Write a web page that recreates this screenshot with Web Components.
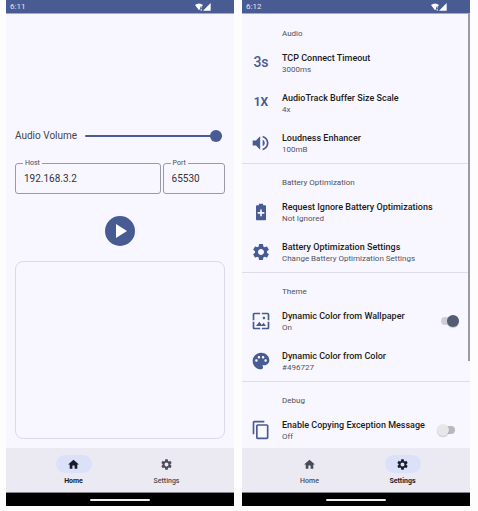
<!DOCTYPE html>
<html lang="en">
<head>
<meta charset="utf-8">
<title>Audio client</title>
<style>
body {
  margin: 0; background: #fdfdfe; font-family: Roboto, sans-serif; color: #1b1b21;
  --primary: #485b93; --surface: #f8f7ff; --bar: #ebeaf3; --pill: #dbe1f9; --muted: #494b57; --line: #dddce8;
}
</style>
</head>
<body>
<phone-pair>
  <phone-screen time="6:11" tab="home"><home-page></home-page></phone-screen>
  <phone-screen time="6:12" tab="settings">
    <settings-page>
      <settings-group heading="Audio">
        <settings-row heading="TCP Connect Timeout" note="3000ms"><text-icon slot="icon" large>3s</text-icon></settings-row>
        <settings-row heading="AudioTrack Buffer Size Scale" note="4x"><text-icon slot="icon">1X</text-icon></settings-row>
        <settings-row heading="Loudness Enhancer" note="100mB"><md-icon slot="icon" name="volume"></md-icon></settings-row>
      </settings-group>
      <settings-group heading="Battery Optimization" divided>
        <settings-row heading="Request Ignore Battery Optimizations" note="Not Ignored"><md-icon slot="icon" name="battery"></md-icon></settings-row>
        <settings-row heading="Battery Optimization Settings" note="Change Battery Optimization Settings"><md-icon slot="icon" name="gear"></md-icon></settings-row>
      </settings-group>
      <settings-group heading="Theme" divided>
        <settings-row heading="Dynamic Color from Wallpaper" note="On" toggle="on"><md-icon slot="icon" name="wallpaper"></md-icon></settings-row>
        <settings-row heading="Dynamic Color from Color" note="#496727"><md-icon slot="icon" name="palette"></md-icon></settings-row>
      </settings-group>
      <settings-group heading="Debug" divided>
        <settings-row heading="Enable Copying Exception Message" note="Off" toggle="off"><md-icon slot="icon" name="copy"></md-icon></settings-row>
      </settings-group>
    </settings-page>
  </phone-screen>
</phone-pair>
<script>
const ICONS = {
  home: 'M10 20v-6h4v6h5v-8h3L12 3 2 12h3v8z',
  gear: 'M19.14 12.94c.04-.3.06-.61.06-.94 0-.32-.02-.64-.07-.94l2.03-1.58c.18-.14.23-.41.12-.61l-1.92-3.32c-.12-.22-.37-.29-.59-.22l-2.39.96c-.5-.38-1.03-.7-1.62-.94l-.36-2.54c-.04-.24-.24-.41-.48-.41h-3.84c-.24 0-.43.17-.47.41l-.36 2.54c-.59.24-1.13.57-1.62.94l-2.39-.96c-.22-.08-.47 0-.59.22L2.74 8.87c-.12.21-.08.47.12.61l2.03 1.58c-.05.3-.09.63-.09.94s.02.64.07.94l-2.03 1.58c-.18.14-.23.41-.12.61l1.92 3.32c.12.22.37.29.59.22l2.39-.96c.5.38 1.03.7 1.62.94l.36 2.54c.05.24.24.41.48.41h3.84c.24 0 .44-.17.47-.41l.36-2.54c.59-.24 1.13-.56 1.62-.94l2.39.96c.22.08.47 0 .59-.22l1.92-3.32c.12-.22.07-.47-.12-.61l-2.01-1.58zM12 15.6c-1.98 0-3.6-1.62-3.6-3.6s1.62-3.6 3.6-3.6 3.6 1.62 3.6 3.6-1.62 3.6-3.6 3.6z',
  volume: 'M2 9v6h4l5 5V4L6 9H2zm14.500 3c0-1.770-1.020-3.290-2.500-4.030v8.050c1.480-.730 2.500-2.250 2.500-4.020zM14 3.230v2.060c2.890.86 5 3.540 5 6.710s-2.110 5.850-5 6.710v2.060c4.010-.91 7-4.490 7-8.770s-2.990-7.860-7-8.770z',
  battery: 'M16.670 4H14.500V2h-5v2H7.330C6.600 4 6 4.600 6 5.330v15.330C6 21.400 6.600 22 7.330 22h9.330c.74 0 1.340-.6 1.340-1.330V5.330C18 4.600 17.400 4 16.670 4zM16 14h-3v3h-2v-3H8v-2h3V9h2v3h3v2z',
  wallpaper: 'M4 4h7V2H4c-1.100 0-2 .9-2 2v7h2V4zm6 9l-4 5h12l-3-4-2.030 2.710L10 13zm7-4.500c0-.83-.67-1.500-1.500-1.500S14 7.670 14 8.500s.67 1.500 1.500 1.500S17 9.330 17 8.500zM20 2h-7v2h7v7h2V4c0-1.100-.9-2-2-2zm0 18h-7v2h7c1.100 0 2-.9 2-2v-7h-2v7zM4 13H2v7c0 1.100.9 2 2 2h7v-2H4v-7z',
  palette: 'M12 2C6.490 2 2 6.490 2 12s4.490 10 10 10c1.380 0 2.500-1.120 2.500-2.500 0-.61-.23-1.200-.64-1.670-.08-.1-.13-.21-.13-.33 0-.28.22-.5.5-.5H16c3.310 0 6-2.690 6-6C22 6.040 17.510 2 12 2zM6.500 13C5.670 13 5 12.330 5 11.500S5.670 10 6.500 10 8 10.670 8 11.500 7.330 13 6.500 13zm3-4C8.670 9 8 8.330 8 7.500S8.670 6 9.500 6s1.500.67 1.500 1.500S10.330 9 9.500 9zm5 0C13.670 9 13 8.330 13 7.500S13.670 6 14.500 6s1.500.67 1.500 1.500S15.330 9 14.500 9zm3 4c-.83 0-1.500-.67-1.500-1.500s.67-1.500 1.500-1.500 1.500.67 1.500 1.500-.67 1.500-1.500 1.500z',
  copy: 'M16 1H4c-1.100 0-2 .9-2 2v14h2V3h12V1zm3 4H8c-1.100 0-2 .9-2 2v14c0 1.100.9 2 2 2h11c1.100 0 2-.9 2-2V7c0-1.100-.9-2-2-2zm0 16H8V7h11v14z',
  play: 'M8 5v14l11-7z',
  wifi: 'M12 22L0 6Q12-3 24 6l-4 5h-5v7z M17 13h3v2h-3z M17 17h3v6h-3z',
  signal: 'M0 23h23V0z'
};

class Base extends HTMLElement {
  connectedCallback() {
    if (this.shadowRoot) return;
    this.attachShadow({ mode: 'open' }).innerHTML =
      `<style>*{box-sizing:border-box}:host{display:block;box-sizing:border-box}${this.css()}</style>${this.html()}`;
  }
  attr(name) { return this.getAttribute(name) || ''; }
  css() { return ''; }
  html() { return '<slot></slot>'; }
}

customElements.define('phone-pair', class extends Base {
  css() { return ':host{display:grid;grid-template-columns:1fr 1fr;gap:8px;height:100vh;padding:0 8px 5px 6px}'; }
});

customElements.define('md-icon', class extends Base {
  css() { return ':host{width:var(--icon-size,20px);height:var(--icon-size,20px)}svg{display:block;width:100%;height:100%;fill:currentColor}'; }
  html() { return `<svg viewBox="0 0 24 24" aria-hidden="true"><path d="${ICONS[this.attr('name')]}"/></svg>`; }
});

customElements.define('text-icon', class extends Base {
  css() { return ':host{font-weight:700;font-size:12px;line-height:18px;padding-bottom:2px}:host([large]){font-weight:500;font-size:14px}'; }
});

customElements.define('phone-screen', class extends Base {
  css() { return `
    :host{display:flex;flex-direction:column;min-width:0;min-height:0;background:var(--surface)}
    main{flex:1;min-height:0;display:flex;flex-direction:column}
    ::slotted(*){flex:1;min-height:0}`; }
  html() { return `<status-bar time="${this.attr('time')}"></status-bar><main><slot></slot></main><nav-bar tab="${this.attr('tab')}"></nav-bar><gesture-bar></gesture-bar>`; }
});

customElements.define('status-bar', class extends Base {
  css() { return `
    :host{display:flex;align-items:center;height:14px;padding:0 23px 0 4px;background:var(--primary);border-bottom:1px solid #a3abcb;color:#e6e9f5;font-size:8px;line-height:13px}
    span{flex:1} md-icon{--icon-size:8px;color:#fff}`; }
  html() { return `<span>${this.attr('time')}</span><md-icon name="wifi"></md-icon><md-icon name="signal"></md-icon>`; }
});

customElements.define('gesture-bar', class extends Base {
  css() { return ':host{display:flex;justify-content:center;align-items:center;height:14px;background:#000;border-top:1px solid #85858b}i{width:60px;height:2px;border-radius:1px;background:#ededed}'; }
  html() { return '<i></i>'; }
});

customElements.define('nav-bar', class extends Base {
  css() { return `
    :host{background:var(--bar);padding:7px 21px 0;height:44px}
    nav{display:flex}
    button{flex:1;border:0;background:none;padding:0;font:500 7px/9px Roboto,sans-serif;color:var(--muted);display:flex;flex-direction:column;align-items:center;gap:4px}
    span{display:flex;align-items:center;justify-content:center;width:36px;height:18px;border-radius:9px}
    md-icon{--icon-size:13px}
    [aria-current]{color:#171b2c;font-weight:700}
    [aria-current] span{background:var(--pill)}`; }
  html() {
    const item = (id, icon, text) => `<button type="button"${this.attr('tab') === id ? ' aria-current="page"' : ''}><span><md-icon name="${icon}"></md-icon></span>${text}</button>`;
    return `<nav>${item('home', 'home', 'Home')}${item('settings', 'gear', 'Settings')}</nav>`;
  }
});

customElements.define('outlined-field', class extends Base {
  css() { return `
    fieldset{margin:0;padding:0 8px;min-width:0;height:35px;border:1px solid #9a99a8;border-radius:3px}
    legend{padding:0 2px;margin-left:-1px;font-size:7px;line-height:8px;color:var(--muted)}
    label{display:block}
    input{display:block;width:100%;height:24px;border:0;padding:0;background:none;outline:0;font:10px/24px Roboto,sans-serif;color:#33333c}`; }
  html() { return `<fieldset><legend><label for="f">${this.attr('label')}</label></legend><input id="f" type="text" value="${this.attr('value')}"></fieldset>`; }
});

customElements.define('home-page', class extends Base {
  css() { return `
    :host{display:flex;flex-direction:column;padding:114px 9px 9px}
    .volume{display:flex;align-items:center;gap:8px;height:16px;font-size:10px;line-height:16px;color:#44454f;padding-right:3px}
    input[type=range]{appearance:none;flex:1;min-width:0;margin:0;height:12px;background:none}
    input::-webkit-slider-runnable-track{height:2px;border-radius:1px;background:var(--primary)}
    input::-webkit-slider-thumb{appearance:none;width:12px;height:12px;margin-top:-5px;border-radius:50%;background:var(--primary)}
    .fields{display:grid;grid-template-columns:7fr 3fr;gap:2px;margin-top:15px}
    button{align-self:center;display:grid;place-items:center;width:30px;height:30px;margin:22px 0 15px;border:0;border-radius:50%;padding:0;background:var(--primary);color:#fff}
    button md-icon{--icon-size:24px}
    .log{flex:1;border:1px solid #dbdae8;border-radius:8px}`; }
  html() { return `
    <div class="volume"><label for="v">Audio Volume</label><input id="v" type="range" min="0" max="100" value="100"></div>
    <div class="fields"><outlined-field label="Host" value="192.168.3.2"></outlined-field><outlined-field label="Port" value="65530"></outlined-field></div>
    <button type="button" aria-label="Play"><md-icon name="play"></md-icon></button>
    <div class="log"></div>`; }
});

customElements.define('settings-page', class extends Base {
  css() { return `
    :host{position:relative;overflow:hidden}
    .list{height:100%;overflow-y:auto;scrollbar-width:none}
    .thumb{position:absolute;top:0;right:0;width:2px;height:80%;background:#9a99a5}`; }
  html() { return '<div class="list"><slot></slot></div><div class="thumb"></div>'; }
});

customElements.define('settings-group', class extends Base {
  css() { return `
    :host{border-top:1px solid transparent}
    :host([divided]){border-top-color:var(--line)}
    h2{margin:0;padding:13px 0 3px 40px;font-size:8px;font-weight:400;line-height:12px;color:#4d505f}`; }
  html() { return `<h2>${this.attr('heading')}</h2><slot></slot>`; }
});

customElements.define('settings-row', class extends Base {
  css() { return `
    :host{display:flex;align-items:center;height:40px;padding:0 11px 0 9px}
    .icon{display:flex;justify-content:center;width:20px;margin-right:11px;color:var(--primary)}
    label{flex:1;min-width:0;white-space:nowrap}
    b,small{display:block}
    b{font-size:9px;font-weight:500;line-height:12px}
    small{font-size:8px;line-height:11px;color:#53545f}
    input{appearance:none;position:relative;width:22px;height:12px;margin:0}
    input::before,input::after{content:"";position:absolute}
    input::before{left:4px;right:4px;top:2px;bottom:2px;border-radius:4px;background:#b9b8bc}
    input::after{left:0;top:0;width:12px;height:12px;border-radius:50%;background:#e7e6e8;box-shadow:0 1px 1px #0003}
    input:checked::before{background:#cdced9}
    input:checked::after{left:auto;right:0;background:#555b71}`; }
  html() {
    const t = this.attr('toggle');
    const text = `<b>${this.attr('heading')}</b><small>${this.attr('note')}</small>`;
    return `<span class="icon"><slot name="icon"></slot></span>` +
      (t ? `<label for="t">${text}</label><input id="t" type="checkbox" role="switch"${t === 'on' ? ' checked' : ''}>` : `<div>${text}</div>`);
  }
});
</script>
</body>
</html>
